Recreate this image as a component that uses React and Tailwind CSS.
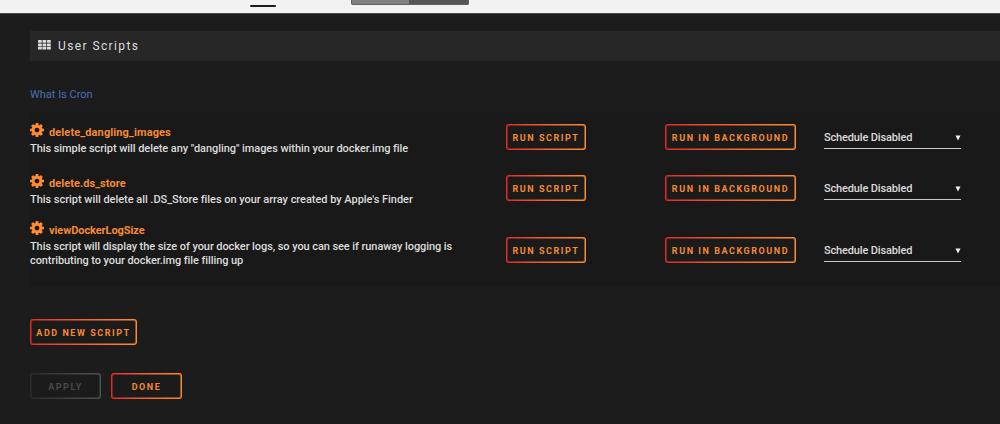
const scripts = [
  {
    name: "delete_dangling_images",
    lines: [{ text: 'This simple script will delete any "dangling" images within your docker.img file', tracking: "tracking-[-0.06px]" }],
    nameTracking: "tracking-[0.11px]",
    row: "h-[51px] pt-[12px]",
    actions: "pt-0",
  },
  {
    name: "delete.ds_store",
    lines: [{ text: "This script will delete all .DS_Store files on your array created by Apple's Finder", tracking: "tracking-[-0.035px]" }],
    nameTracking: "tracking-[0.05px]",
    row: "h-[47px] pt-[12px]",
    actions: "pt-0",
  },
  {
    name: "viewDockerLogSize",
    lines: [
      { text: "This script will display the size of your docker logs, so you can see if runaway logging is", tracking: "tracking-[-0.08px]" },
      { text: "contributing to your docker.img file filling up", tracking: "tracking-[-0.08px]" },
    ],
    nameTracking: "tracking-[-0.08px]",
    row: "h-[75px] pt-[12px]",
    actions: "pt-[15px]",
  },
]

const GearIcon = ({ className }) => (
  <svg className={className} viewBox="0 128 1536 1536" fill="currentColor">
    <path d="M1024 896q0-106-75-181t-181-75-181 75-75 181 75 181 181 75 181-75 75-181zm512-109v222q0 12-8 23t-20 13l-185 28q-19 54-39 91 35 50 107 138 10 12 10 25t-9 23q-27 37-99 108t-94 71q-12 0-26-9l-138-108q-44 23-91 38-16 136-29 186-7 28-36 28h-222q-14 0-24.500-8.500t-11.500-21.500l-28-184q-49-16-90-37l-141 107q-10 9-25 9-14 0-25-11-126-114-165-168-7-10-7-23 0-12 8-23 15-21 51-66.500t54-70.500q-27-50-41-99l-183-27q-13-2-21-12.500t-8-23.500v-222q0-12 8-23t19-13l186-28q14-46 39-92-40-57-107-138-10-12-10-24 0-10 9-23 26-36 98.500-107.500t94.500-71.500q13 0 26 10l138 107q44-23 91-38 16-136 29-186 7-28 36-28h222q14 0 24.500 8.500t11.500 21.500l28 184q49 16 90 37l142-107q9-9 24-9 13 0 25 10 129 119 165 170 7 8 7 22 0 12-8 23-15 21-51 66.500t-54 70.500q26 50 41 98l183 28q13 2 21 12.500t8 23.500z" />
  </svg>
)

const GridIcon = ({ className }) => (
  <svg className={className} viewBox="0 0 13 10" fill="currentColor">
    {[0, 3.4, 6.8].map((y) =>
      [0, 4.5, 9].map((x) => <rect key={`${x}-${y}`} x={x} y={y} width="3.8" height="2.8" rx="0.5" />)
    )}
  </svg>
)

const Button = ({ children, className, disabled }) => (
  <button
    disabled={disabled}
    className={`h-[26px] shrink-0 rounded-[3px] p-px ${
      disabled
        ? "bg-linear-to-r from-[#2c2c2c] to-[#505050] text-[#484848]"
        : "bg-linear-to-r from-[#e22828] to-[#ff8c2f] text-[#f58a33]"
    } ${className}`}
  >
    <span className="flex h-full items-center justify-center rounded-[2px] border border-[#1b1b1b]/50 bg-[#1b1b1b] bg-clip-padding pt-[3px] text-[9px] font-bold tracking-[1.55px] whitespace-nowrap">
      {children}
    </span>
  </button>
)

const Select = () => (
  <div className="flex h-[25px] w-[137px] items-center justify-between border-b border-[#c8c8c8] text-[11px] font-medium">
    <span className="pt-[4px] tracking-[-0.15px]">Schedule Disabled</span>
    <svg className="mt-[3px] h-[6px] w-[6px]" viewBox="0 0 6 6" fill="#f2f2f2">
      <path d="M.5 .5h5L3 5.500z" />
    </svg>
  </div>
)

const ScriptRow = ({ script }) => (
  <div className={`flex ${script.row}`}>
    <div className="w-[476px] shrink-0">
      <div className="flex h-[18px] items-start text-[#f58a33]">
        <GearIcon className="mt-[-1px] h-[14px] w-[14px] text-[#ff8c2f]" />
        <span className={`ml-[5px] text-[11px] leading-[18px] font-bold ${script.nameTracking}`}>{script.name}</span>
      </div>
      {script.lines.map((line) => (
        <p key={line.text} className={`text-[11px] leading-[14px] font-medium whitespace-nowrap ${line.tracking}`}>
          {line.text}
        </p>
      ))}
    </div>
    <div className={`flex ${script.actions}`}>
      <Button className="mr-[79px] w-[80px]">RUN SCRIPT</Button>
      <Button className="mr-[28px] w-[131px]">RUN IN BACKGROUND</Button>
      <Select />
    </div>
  </div>
)

const App = () => {
  return (
    <div className="h-[424px] w-[1000px] overflow-hidden bg-[#1c1c1c] text-[#dcdcdc] font-[Roboto,sans-serif]">
      <header className="flex h-[14px] items-start border-b border-[#4a4a4a] bg-[#f2f2f2] pl-[250px]">
        <div className="mt-[5px] h-[2px] w-[26px] rounded-full bg-[#1c1c1c]" />
        <div className="ml-[75px] flex h-[5px] w-[118px] rounded-b-[2px] border-x border-b border-[#606060] bg-[#555555]">
          <div className="w-[57px] bg-[#808080]" />
        </div>
      </header>
      <main className="pt-[17px] pl-[30px]">
        <h1 className="flex h-[30px] items-center bg-[#272727] pl-[8px] text-[12px]">
          <GridIcon className="mt-[-2px] h-[10px] w-[13px]" />
          <span className="mt-[-1px] ml-[7px] tracking-[1.4px]">User Scripts</span>
        </h1>
        <a className="mt-[26px] block h-[25px] text-[11px] leading-[16px] text-[#486dba]">What Is Cron</a>
        <section className="h-[174px] bg-[#191919]">
          {scripts.map((script) => (
            <ScriptRow key={script.name} script={script} />
          ))}
        </section>
        <div className="mt-[33px] flex">
          <Button className="w-[107px]">ADD NEW SCRIPT</Button>
        </div>
        <div className="mt-[28px] flex gap-[10px]">
          <Button disabled className="w-[71px]">APPLY</Button>
          <Button className="w-[71px]">DONE</Button>
        </div>
      </main>
    </div>
  )
}

export default App
